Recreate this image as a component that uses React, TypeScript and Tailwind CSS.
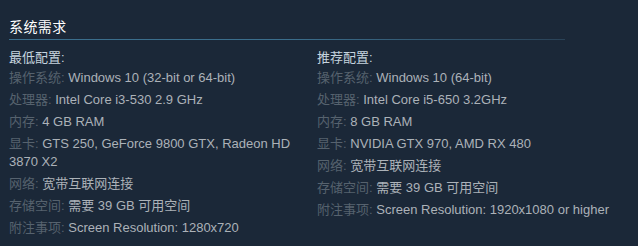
import React from "react";

const font = {
  fontFamily: '"Liberation Sans", Arial, "Noto Sans CJK SC", sans-serif',
};

type Row = { label: string; value: string };

const minRows: Row[] = [
  { label: "操作系统:", value: "Windows 10 (32-bit or 64-bit)" },
  { label: "处理器:", value: "Intel Core i3-530 2.9 GHz" },
  { label: "内存:", value: "4 GB RAM" },
  { label: "显卡:", value: "GTS 250, GeForce 9800 GTX, Radeon HD 3870 X2" },
  { label: "网络:", value: "宽带互联网连接" },
  { label: "存储空间:", value: "需要 39 GB 可用空间" },
  { label: "附注事项:", value: "Screen Resolution: 1280x720" },
];

const recRows: Row[] = [
  { label: "操作系统:", value: "Windows 10 (64-bit)" },
  { label: "处理器:", value: "Intel Core i5-650 3.2GHz" },
  { label: "内存:", value: "8 GB RAM" },
  { label: "显卡:", value: "NVIDIA GTX 970, AMD RX 480" },
  { label: "网络:", value: "宽带互联网连接" },
  { label: "存储空间:", value: "需要 39 GB 可用空间" },
  { label: "附注事项:", value: "Screen Resolution: 1920x1080 or higher" },
];

function Col({ title, rows }: { title: string; rows: Row[] }) {
  return (
    <div className="w-[296px]">
      <div className="text-[13px] leading-[18px] text-[#c6d4df] mb-[2px]">{title}</div>
      <ul>
        {rows.map((r) => (
          <li key={r.label} className="text-[13px] leading-[18px] text-[#acb2b8] mb-[4px]">
            <span className="text-[#56626e]">{r.label}</span> {r.value}
          </li>
        ))}
      </ul>
    </div>
  );
}

export default function App() {
  return (
    <div className="w-[638px] h-[246px] bg-[#1b2838] overflow-hidden" style={font}>
      <div className="px-[9px]">
        <div className="w-[556px] pt-[17px] pb-[2px] border-b border-[#3b6e8c] [border-image:linear-gradient(to_right,#3b6e8c_0%,#3b6e8c_50%,#2a4257_100%)_1]">
          <h2 className="text-[14px] leading-[20px] text-white tracking-[0.4px]">系统需求</h2>
        </div>
        <div className="flex mt-[9px]">
          <Col title="最低配置:" rows={minRows} />
          <div className="ml-[12px]">
            <Col title="推荐配置:" rows={recRows} />
          </div>
        </div>
      </div>
    </div>
  );
}
